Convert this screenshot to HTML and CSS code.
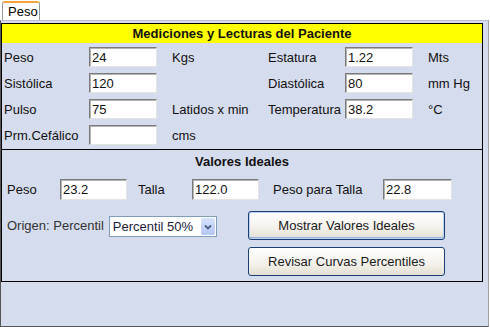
FILE: index.html
```html
<!DOCTYPE html>
<html lang="es">
<head>
  <meta charset="UTF-8" />
  <title>Peso</title>
  <link rel="stylesheet" href="styles.css">
</head>
<body>
  <div class="tabs">
    <div class="tab">Peso</div>
  </div>

  <div class="panel">
    <div class="box">
      <div class="title">Mediciones y Lecturas del Paciente</div>

      <div class="grid">
        <label>Peso</label><input type="text" value="24"><span class="unit">Kgs</span>
        <label>Estatura</label><input type="text" value="1.22"><span class="unit">Mts</span>

        <label>Sistólica</label><input type="text" value="120"><span class="unit"></span>
        <label>Diastólica</label><input type="text" value="80"><span class="unit">mm Hg</span>

        <label>Pulso</label><input type="text" value="75"><span class="unit">Latidos x min</span>
        <label>Temperatura</label><input type="text" value="38.2"><span class="unit">°C</span>

        <label>Prm.Cefálico</label><input type="text" value=""><span class="unit">cms</span>
      </div>

      <div class="ideal">
        <div class="subtitle">Valores Ideales</div>
        <div class="vrow">
          <label class="l-peso">Peso</label><input type="text" class="w67" value="23.2">
          <label class="l-talla">Talla</label><input type="text" class="w67" value="122.0">
          <label class="l-ppt">Peso para Talla</label><input type="text" class="w69" value="22.8">
        </div>
        <div class="actions">
          <div class="origen">
            <label>Origen: Percentil</label>
            <div class="combo">
              <select>
                <option>Percentil 50%</option>
                <option>Percentil 3%</option>
                <option>Percentil 97%</option>
              </select>
              <span class="arrow">
                <svg width="8" height="6" viewBox="0 0 8 6"><path d="M1 1.5 L4 4.5 L7 1.5" fill="none" stroke="#4d6185" stroke-width="1.8"/></svg>
              </span>
            </div>
          </div>
          <div class="buttons">
            <button class="btn default">Mostrar Valores Ideales</button>
            <button class="btn">Revisar Curvas Percentiles</button>
          </div>
        </div>
      </div>
    </div>
  </div>
</body>
</html>
```

FILE: styles.css
```css
html, body {
  margin: 0; padding: 0;
  background: #fff;
  font-family: 'Liberation Sans', Arial, sans-serif;
  font-size: 13px; color: #111;
}
.tabs { height: 20px; display: flex; padding-left: 2px; }
.tab {
  margin-top: 1px; height: 19px; width: 38px;
  box-sizing: border-box;
  border: 1px solid #919b9c; border-bottom: none;
  border-top: 2px solid #f3a73b;
  border-radius: 3px 3px 0 0;
  background: #fff; padding: 1px 0 0 5px;
  line-height: 15px; color: #000;
}
.panel {
  width: 489px; height: 307px; box-sizing: border-box;
  background: #d5dced;
  border: 1px solid #555; border-top-color: #b8c0cf; border-right-color: #9a9fa8;
  padding: 2px 5px 0 0;
}
.box {
  border: 1px solid #000;
  height: 259px; box-sizing: border-box;
}
.title {
  background: #ffff00;
  height: 19px; line-height: 19px;
  text-align: center; font-weight: bold; color: #111;
}
.grid {
  display: grid;
  grid-template-columns: 85px 68px 111px 77px 68px auto;
  grid-auto-rows: 20px;
  row-gap: 6px;
  padding: 4px 0 4px 2px;
  align-items: center;
}
.grid .unit { padding-left: 15px; }
input[type=text] {
  height: 20px; box-sizing: border-box; width: 68px;
  font: 13px 'Liberation Sans', Arial, sans-serif; color: #111;
  background: #fff; padding: 0 0 0 2px; margin: 0;
  border: 1px solid; border-color: #7b7b7b #e4e4e4 #e4e4e4 #7b7b7b;
  box-shadow: inset 1px 1px 0 #b4b4b4;
  outline: none;
}
.ideal { border-top: 1px solid #000; }
.subtitle {
  height: 24px; line-height: 24px;
  text-align: center; font-weight: bold;
}
.vrow {
  display: flex; align-items: center;
  margin-top: 5px; padding-left: 5px; height: 21px;
}
.vrow input[type=text] { height: 21px; }
.vrow .w67 { width: 67px; }
.vrow .w69 { width: 69px; }
.l-peso { width: 53px; }
.l-talla { margin-left: 11px; width: 54px; }
.l-ppt { margin-left: 14px; width: 110px; }
.actions {
  display: flex; margin-top: 11px;
}
.origen {
  width: 246px; height: 29px; box-sizing: border-box;
  padding-left: 5px; display: flex; align-items: center; gap: 5px;
  color: #333;
}
.combo {
  display: flex; width: 108px; height: 21px; box-sizing: border-box;
  margin-top: 2px;
  border: 1px solid #7f9db9; background: #fff;
}
.combo select {
  appearance: none; -webkit-appearance: none;
  border: none; background: transparent; outline: none;
  flex: 1; min-width: 0; padding: 0 0 0 3px; margin: 0;
  font: 13px 'Liberation Sans', Arial, sans-serif; color: #1c1c3c;
}
.arrow {
  width: 14px; margin: 1px; display: flex; align-items: center; justify-content: center;
  background: linear-gradient(#d6e2fc, #b4c8f4);
  border-radius: 2px;
}
.buttons { display: flex; flex-direction: column; gap: 7px; }
.btn {
  width: 197px; height: 29px;
  font: 13px 'Liberation Sans', Arial, sans-serif; color: #1a1a1a;
  border: 1px solid #1c3f73; border-radius: 3px;
  background: linear-gradient(#ffffff, #f3f1ea 60%, #e2ded2);
  padding: 0;
}
.btn.default {
  box-shadow: inset 0 0 0 1px #bcd0f2, inset 0 -1px 0 1px #9ab5e4;
}
```
